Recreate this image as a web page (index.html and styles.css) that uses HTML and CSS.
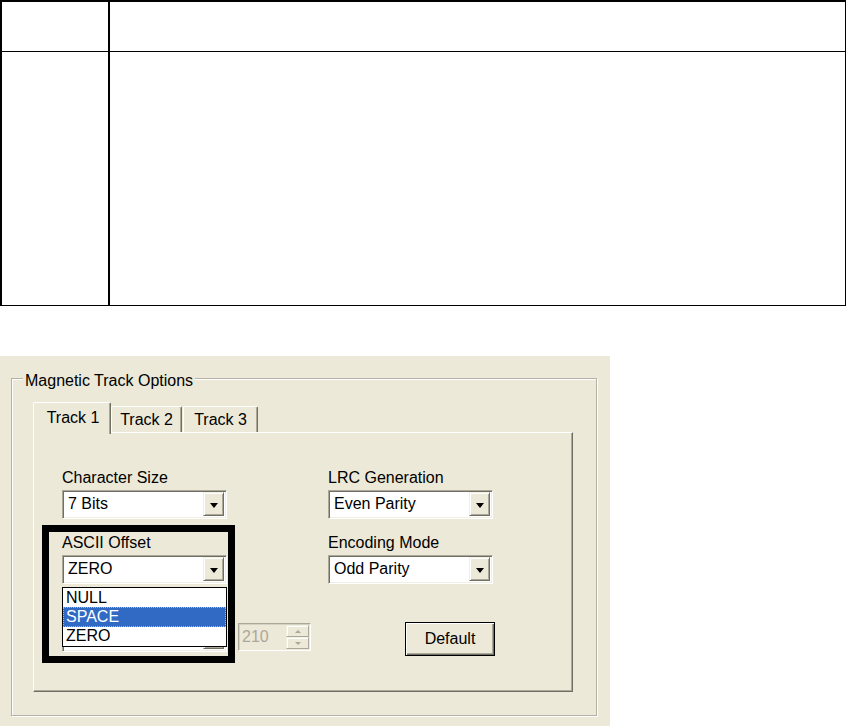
FILE: index.html
```html
<!DOCTYPE html>
<html>
<head>
<meta charset="utf-8">
<link rel="stylesheet" href="styles.css">
</head>
<body>
<div class="doc-table">
  <div class="cell head left"></div>
  <div class="cell head right"></div>
  <div class="cell body left"></div>
  <div class="cell body right"></div>
</div>

<div class="dialog">
  <div class="group">
    <span class="legend">Magnetic Track Options</span>
    <div class="tabs">
      <div class="tab selected t1">Track 1</div>
      <div class="tab t2">Track 2</div>
      <div class="tab t3">Track 3</div>
    </div>
    <div class="panel">
      <div class="fields">
        <div class="field">
          <div class="label">Character Size</div>
          <div class="combo"><span class="value">7 Bits</span><span class="drop"><span class="arrow"></span></span></div>
        </div>
        <div class="field">
          <div class="label">LRC Generation</div>
          <div class="combo"><span class="value">Even Parity</span><span class="drop"><span class="arrow"></span></span></div>
        </div>
        <div class="field open">
          <div class="label">ASCII Offset</div>
          <div class="combo"><span class="value">ZERO</span><span class="drop"><span class="arrow"></span></span></div>
          <div class="list">
            <div class="item">NULL</div>
            <div class="item sel">SPACE</div>
            <div class="item">ZERO</div>
          </div>
        </div>
        <div class="field">
          <div class="label">Encoding Mode</div>
          <div class="combo"><span class="value">Odd Parity</span><span class="drop"><span class="arrow"></span></span></div>
        </div>
      </div>
      <div class="row3">
        <div class="combo hidden-combo"><span class="value"></span><span class="drop"><span class="arrow"></span></span></div>
        <div class="spinner">
          <span class="spin-value">210</span>
          <span class="spin-btns">
            <span class="spin up"><span class="sarrow up"></span></span>
            <span class="spin down"><span class="sarrow down"></span></span>
          </span>
        </div>
        <div class="button">Default</div>
      </div>
      <div class="annotation"></div>
    </div>
  </div>
</div>
</body>
</html>
```

FILE: styles.css
```css
html, body {
  margin: 0;
  padding: 0;
  background: #ffffff;
}

body {
  width: 846px;
  height: 726px;
  overflow: hidden;
  font-family: "Liberation Sans", Arial, sans-serif;
  font-size: 16px;
  line-height: 18px;
  color: #000;
}

/* ---------- top document table ---------- */
.doc-table {
  width: 846px;
  height: 306px;
  box-sizing: border-box;
  border-style: solid;
  border-color: #000;
  border-width: 2px 1px 1px 2px;
  display: grid;
  grid-template-columns: 108px 1fr;
  grid-template-rows: 50px 1fr;
}

.cell {
  box-sizing: border-box;
}

.cell.left {
  border-right: 2px solid #000;
}

.cell.head {
  border-bottom: 1px solid #000;
}

/* ---------- dialog ---------- */
.dialog {
  margin-top: 50px;
  width: 610px;
  height: 370px;
  background: #ECE9D8;
  box-sizing: border-box;
  padding: 22px 0 0 11px;
}

.group {
  position: relative;
  width: 586px;
  height: 338px;
  box-sizing: border-box;
  border: 1px solid #B5B2A3;
  box-shadow: inset 1px 1px 0 #ffffff, 1px 1px 0 #ffffff;
  padding: 23px 0 0 21px;
}

.legend {
  position: absolute;
  top: -7px;
  left: 11px;
  padding: 0 2px;
  background: #ECE9D8;
  white-space: nowrap;
}

/* ---------- tabs ---------- */
.tabs {
  display: flex;
  align-items: flex-end;
  height: 30px;
  position: relative;
  z-index: 2;
}

.tab {
  box-sizing: border-box;
  height: 26px;
  background: #ECE9D8;
  border-top: 1px solid #ffffff;
  border-left: 1px solid #ffffff;
  border-right: 1px solid #716F64;
  box-shadow: inset -1px 0 0 #ACA899;
  border-radius: 2px 2px 0 0;
  text-align: center;
  padding-top: 4px;
  white-space: nowrap;
}

.tab.selected {
  height: 32px;
  margin-bottom: -2px;
  padding-top: 6px;
}

.t1 { width: 78px; padding-left: 2px; }
.t2 { width: 71px; }
.t3 { width: 75px; margin-left: 1px; }

.panel {
  position: relative;
  width: 540px;
  height: 260px;
  box-sizing: border-box;
  border-top: 1px solid #ffffff;
  border-left: 1px solid #ffffff;
  border-right: 1px solid #716F64;
  border-bottom: 1px solid #716F64;
  box-shadow: inset -1px -1px 0 #ACA899;
  padding: 36px 0 0 28px;
}

/* ---------- fields ---------- */
.fields {
  display: grid;
  grid-template-columns: 165px 165px;
  column-gap: 101px;
  row-gap: 15px;
}

.field {
  position: relative;
}

.label {
  height: 18px;
  margin-bottom: 3px;
  white-space: nowrap;
}

.combo {
  box-sizing: border-box;
  height: 29px;
  width: 165px;
  background: #ffffff;
  border-style: solid;
  border-width: 1px;
  border-color: #ACA899 #ffffff #ffffff #ACA899;
  box-shadow: inset 1px 1px 0 #716F64, inset -1px -1px 0 #F1EFE2;
  display: flex;
  align-items: center;
  padding: 1px 2px 2px 5px;
}

.combo .value {
  flex: 1;
  min-width: 0;
  white-space: nowrap;
  overflow: hidden;
}

.drop {
  flex: 0 0 21px;
  box-sizing: border-box;
  width: 21px;
  height: 100%;
  background: #ECE9D8;
  border-style: solid;
  border-width: 1px;
  border-color: #F1EFE2 #716F64 #716F64 #F1EFE2;
  box-shadow: inset 1px 1px 0 #ffffff, inset -1px -1px 0 #ACA899;
  display: flex;
  align-items: center;
  justify-content: center;
}

.arrow {
  width: 0;
  height: 0;
  border-left: 4px solid transparent;
  border-right: 4px solid transparent;
  border-top: 5px solid #000;
  margin-top: 2px;
}

/* dropdown list (open) */
.list {
  position: absolute;
  top: calc(100% + 3px);
  left: 0;
  width: 165px;
  height: 60px;
  box-sizing: border-box;
  background: #ffffff;
  border: 1px solid #000;
  display: flex;
  flex-direction: column;
  z-index: 5;
}

.item {
  flex: 1;
  padding-left: 3px;
  display: flex;
  align-items: center;
  white-space: nowrap;
}

.item.sel {
  background: #316AC5;
  color: #ffffff;
  outline: 1px dotted #D9B27A;
  outline-offset: -1px;
}

/* ---------- row 3 ---------- */
.row3 {
  display: flex;
  align-items: flex-start;
  margin-top: 38px;
}

.hidden-combo {
  height: 30px;
}

.spinner {
  box-sizing: border-box;
  margin-left: 11px;
  margin-top: 1px;
  width: 73px;
  height: 28px;
  background: #ECE9D8;
  border-style: solid;
  border-width: 1px;
  border-color: #ACA899 #ffffff #ffffff #ACA899;
  box-shadow: inset 1px 1px 0 #D6D2C2;
  display: flex;
  align-items: center;
  padding: 1px 1px 1px 3px;
  color: #ACA899;
}

.spin-value {
  flex: 1;
}

.spin-btns {
  flex: 0 0 23px;
  display: flex;
  flex-direction: column;
  width: 23px;
  height: 100%;
}

.spin {
  flex: 1;
  box-sizing: border-box;
  background: #ECE9D8;
  border-style: solid;
  border-width: 1px;
  border-color: #F1EFE2 #ACA899 #ACA899 #F1EFE2;
  box-shadow: inset 1px 1px 0 #ffffff;
  display: flex;
  align-items: center;
  justify-content: center;
}

.sarrow {
  width: 0;
  height: 0;
  border-left: 3px solid transparent;
  border-right: 3px solid transparent;
}

.sarrow.up { border-bottom: 3px solid #ACA899; }
.sarrow.down { border-top: 3px solid #ACA899; }

.button {
  box-sizing: border-box;
  margin-left: 94px;
  width: 90px;
  height: 34px;
  background: #ECE9D8;
  border: 1px solid #000;
  box-shadow: inset 1px 1px 0 #ffffff, inset -1px -1px 0 #716F64, inset -2px -2px 0 #ACA899;
  display: flex;
  align-items: center;
  justify-content: center;
}

/* ---------- annotation box ---------- */
.annotation {
  position: absolute;
  left: 8px;
  top: 92px;
  width: 193px;
  height: 138px;
  box-sizing: border-box;
  border: 7px solid #000;
  z-index: 6;
  pointer-events: none;
}
```
